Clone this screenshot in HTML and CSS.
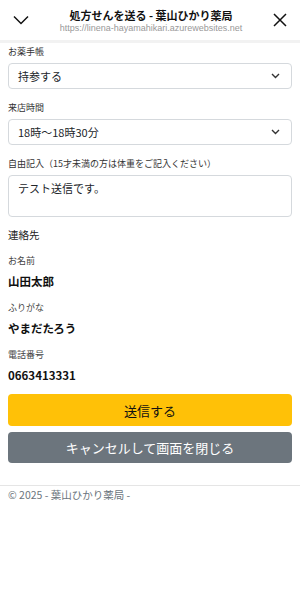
FILE: index.html
```html
<!DOCTYPE html>
<html lang="ja">
<head>
  <meta charset="UTF-8">
  <meta name="viewport" content="width=device-width, initial-scale=1.0">
  <title>処方せんを送る - 葉山ひかり薬局</title>
  <link rel="stylesheet" href="styles.css">
</head>
<body>
  <header class="topbar">
    <svg class="topbar-icon" width="16" height="10" viewBox="0 0 16 10">
      <path d="M1 1.5 L8 8.5 L15 1.5" fill="none" stroke="#111" stroke-width="1.5"/>
    </svg>
    <div class="topbar-title">
      <div class="title">処方せんを送る - 葉山ひかり薬局</div>
      <div class="url">https://linena-hayamahikari.azurewebsites.net</div>
    </div>
    <svg class="topbar-icon" width="14" height="14" viewBox="0 0 14 14">
      <path d="M1 1 L13 13 M13 1 L1 13" fill="none" stroke="#111" stroke-width="1.5"/>
    </svg>
  </header>

  <main class="content">
    <label class="field-label">お薬手帳</label>
    <div class="select">
      <span>持参する</span>
      <svg width="9" height="6" viewBox="0 0 9 6"><path d="M1 1 L4.5 4.5 L8 1" fill="none" stroke="#333" stroke-width="1.4"/></svg>
    </div>

    <label class="field-label">来店時間</label>
    <div class="select">
      <span>18時〜18時30分</span>
      <svg width="9" height="6" viewBox="0 0 9 6"><path d="M1 1 L4.5 4.5 L8 1" fill="none" stroke="#333" stroke-width="1.4"/></svg>
    </div>

    <label class="field-label">自由記入（15才未満の方は体重をご記入ください）</label>
    <div class="textarea">テスト送信です。</div>

    <div class="section-title">連絡先</div>

    <div class="info-label">お名前</div>
    <div class="info-value">山田太郎</div>

    <div class="info-label">ふりがな</div>
    <div class="info-value">やまだたろう</div>

    <div class="info-label">電話番号</div>
    <div class="info-value">0663413331</div>

    <button class="btn btn-submit">送信する</button>
    <button class="btn btn-cancel">キャンセルして画面を閉じる</button>
  </main>

  <footer class="footer">© 2025 - 葉山ひかり薬局 -</footer>
</body>
</html>
```

FILE: styles.css
```css
body {
  margin: 0;
  font-family: "Noto Sans CJK JP", "Noto Sans", sans-serif;
  color: #212529;
  background: #fff;
}
.topbar {
  display: flex;
  align-items: center;
  justify-content: space-between;
  height: 40px;
  padding: 0 13px;
  border-bottom: 3px solid #f2f2f2;
}
.topbar-icon {
  flex: none;
}
.topbar-title {
  text-align: center;
  margin-top: 1px;
}
.title {
  font-size: 11px;
  font-weight: bold;
  line-height: 15px;
  color: #111;
}
.url {
  font-size: 9px;
  line-height: 11px;
  color: #999;
  font-family: "Liberation Sans", "Noto Sans CJK JP", sans-serif;
}
.content {
  padding: 2px 8px 0;
}
.field-label {
  display: block;
  font-size: 9px;
  line-height: 13px;
  margin-top: 12px;
  margin-bottom: 5px;
  color: #333;
}
.field-label:first-child {
  margin-top: 0;
}
.select {
  display: flex;
  align-items: center;
  justify-content: space-between;
  height: 26px;
  box-sizing: border-box;
  padding: 0 11px 0 9px;
  border: 1px solid #d5d9dd;
  border-radius: 4px;
  font-size: 11px;
  color: #212529;
}
.textarea {
  height: 42px;
  box-sizing: border-box;
  margin-top: 2px;
  padding: 4px 9px;
  border: 1px solid #d5d9dd;
  border-radius: 4px;
  font-size: 11px;
  line-height: 16px;
}
.section-title {
  font-size: 10.5px;
  line-height: 16px;
  margin-top: 10px;
  color: #222;
}
.info-label {
  font-size: 9px;
  line-height: 13px;
  margin-top: 11px;
  color: #444;
}
.info-label + .info-value + .info-label {
  margin-top: 12px;
}
.info-value {
  font-size: 11.5px;
  font-weight: bold;
  line-height: 16px;
  margin-top: 6px;
  color: #111;
}
.btn {
  display: block;
  width: 100%;
  border: none;
  border-radius: 4px;
  font-family: inherit;
  font-size: 13px;
  cursor: pointer;
}
.btn-submit {
  height: 32px;
  margin-top: 11px;
  background: #ffc107;
  color: #111;
}
.btn-cancel {
  height: 31px;
  margin-top: 6px;
  background: #6c757d;
  color: #fff;
}
.footer {
  margin-top: 22px;
  border-top: 1px solid #e5e5e5;
  padding: 1px 8px 0;
  font-size: 10.5px;
  line-height: 15px;
  color: #6c757d;
}
```
